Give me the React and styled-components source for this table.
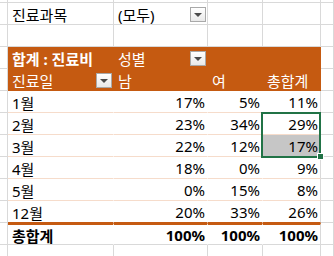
import React from "react";
import styled, { createGlobalStyle } from "styled-components";

const GRID = "#D9D9D9";
const PEACH = "#F6DCCB";
const ORANGE = "#C55A11";
const GREEN = "#217346";

const GlobalStyle = createGlobalStyle`
  html, body {
    margin: 0;
    padding: 0;
    background: #fff;
  }
  body {
    font-family: "Noto Sans", "Noto Sans CJK KR", sans-serif;
  }
`;

// column widths incl. right gridline: stub, 진료일, 남, 여, 총합계, next
const W = [8, 106, 94, 55, 58, 13];

const Sheet = styled.div`
  position: relative;
  width: 334px;
  height: 256px;
  overflow: hidden;
  background: #fff;
  font-size: 15px;
  color: #000;
`;

const Row = styled.div`
  display: flex;
  height: ${p => p.$h || 22}px;
`;

const Cell = styled.div`
  box-sizing: border-box;
  flex: none;
  width: ${p => p.$w}px;
  display: flex;
  align-items: center;
  justify-content: ${p => (p.$right ? "flex-end" : "flex-start")};
  padding: 1px 2px 0 4px;
  background: ${p => p.$bg || "#fff"};
  color: ${p => p.$color || "#000"};
  font-weight: ${p => (p.$bold ? 700 : 400)};
  border-right: 1px solid ${p => p.$br || GRID};
  border-bottom: 1px solid ${p => p.$bb || GRID};
  border-top: ${p => (p.$bt ? `2px double ${p.$bt}` : "none")};
  white-space: nowrap;
  overflow: visible;
`;

const FilterCell = styled(Cell)`
  justify-content: space-between;
  padding-right: 1px;
`;

const DropButton = styled.span`
  box-sizing: border-box;
  width: 16px;
  height: 15px;
  flex: none;
  display: flex;
  align-items: center;
  justify-content: center;
  border: 1px solid #a9a9a9;
  background: linear-gradient(#ffffff, #e9e9e9);

  &::after {
    content: "";
    margin-top: 2px;
    border-left: 4px solid transparent;
    border-right: 4px solid transparent;
    border-top: 4px solid #4a4a4a;
  }
`;

const Selection = styled.div`
  position: absolute;
  left: 261px;
  top: 112px;
  width: 60px;
  height: 46px;
  box-sizing: border-box;
  border: 2px solid ${GREEN};
  pointer-events: none;
`;

const Handle = styled.div`
  position: absolute;
  left: 317px;
  top: 153px;
  width: 5px;
  height: 5px;
  background: ${GREEN};
  border: 1px solid #fff;
`;

const data = [
  ["1월", "17%", "5%", "11%"],
  ["2월", "23%", "34%", "29%"],
  ["3월", "22%", "12%", "17%"],
  ["4월", "18%", "0%", "9%"],
  ["5월", "0%", "15%", "8%"],
  ["12월", "20%", "33%", "26%"]
];

const PlainRow = ({ h }) => (
  <Row $h={h}>
    {W.map((w, i) => (
      <Cell key={i} $w={w} />
    ))}
  </Row>
);

const DataRow = ({ cells, last, bold, total, selected }) => {
  const bb = total ? GRID : last ? ORANGE : PEACH;
  const bt = total ? ORANGE : null;
  return (
    <Row>
      <Cell $w={W[0]} />
      <Cell $w={W[1]} $br="#fff" $bb={bb} $bt={bt} $bold={bold}>
        {cells[0]}
      </Cell>
      <Cell $w={W[2]} $br="#fff" $bb={bb} $bt={bt} $bold={bold} $right>
        {cells[1]}
      </Cell>
      <Cell $w={W[3]} $br="#fff" $bb={bb} $bt={bt} $bold={bold} $right>
        {cells[2]}
      </Cell>
      <Cell
        $w={W[4]}
        $bb={bb}
        $bt={bt}
        $bold={bold}
        $right
        $bg={selected ? "#C6C6C6" : "#fff"}
      >
        {cells[3]}
      </Cell>
      <Cell $w={W[5]} />
    </Row>
  );
};

export default function App() {
  return (
    <>
      <GlobalStyle />
      <Sheet>
        <PlainRow h={3} />
        <Row>
          <Cell $w={W[0]} />
          <Cell $w={W[1]}>진료과목</Cell>
          <FilterCell $w={W[2]}>
            (모두)
            <DropButton />
          </FilterCell>
          <Cell $w={W[3]} />
          <Cell $w={W[4]} />
          <Cell $w={W[5]} />
        </Row>
        <PlainRow />
        <Row>
          <Cell $w={W[0]} />
          <Cell $w={W[1]} $bg={ORANGE} $br={ORANGE} $bb={ORANGE} $color="#fff" $bold>
            합계 : 진료비
          </Cell>
          <FilterCell $w={W[2]} $bg={ORANGE} $br={ORANGE} $bb={ORANGE} $color="#fff">
            성별
            <DropButton />
          </FilterCell>
          <Cell $w={W[3]} $bg={ORANGE} $br={ORANGE} $bb={ORANGE} />
          <Cell $w={W[4]} $bg={ORANGE} $br={ORANGE} $bb={ORANGE} />
          <Cell $w={W[5]} />
        </Row>
        <Row>
          <Cell $w={W[0]} />
          <FilterCell $w={W[1]} $bg={ORANGE} $br={ORANGE} $bb={ORANGE} $color="#fff">
            진료일
            <DropButton />
          </FilterCell>
          <Cell $w={W[2]} $bg={ORANGE} $br={ORANGE} $bb={ORANGE} $color="#fff">
            남
          </Cell>
          <Cell $w={W[3]} $bg={ORANGE} $br={ORANGE} $bb={ORANGE} $color="#fff">
            여
          </Cell>
          <Cell $w={W[4]} $bg={ORANGE} $br={ORANGE} $bb={ORANGE} $color="#fff">
            총합계
          </Cell>
          <Cell $w={W[5]} />
        </Row>
        {data.map((r, i) => (
          <DataRow
            key={r[0]}
            cells={r}
            last={i === data.length - 1}
            selected={i === 2}
          />
        ))}
        <DataRow cells={["총합계", "100%", "100%", "100%"]} bold total />
        <PlainRow h={12} />
        <Selection />
        <Handle />
      </Sheet>
    </>
  );
}
